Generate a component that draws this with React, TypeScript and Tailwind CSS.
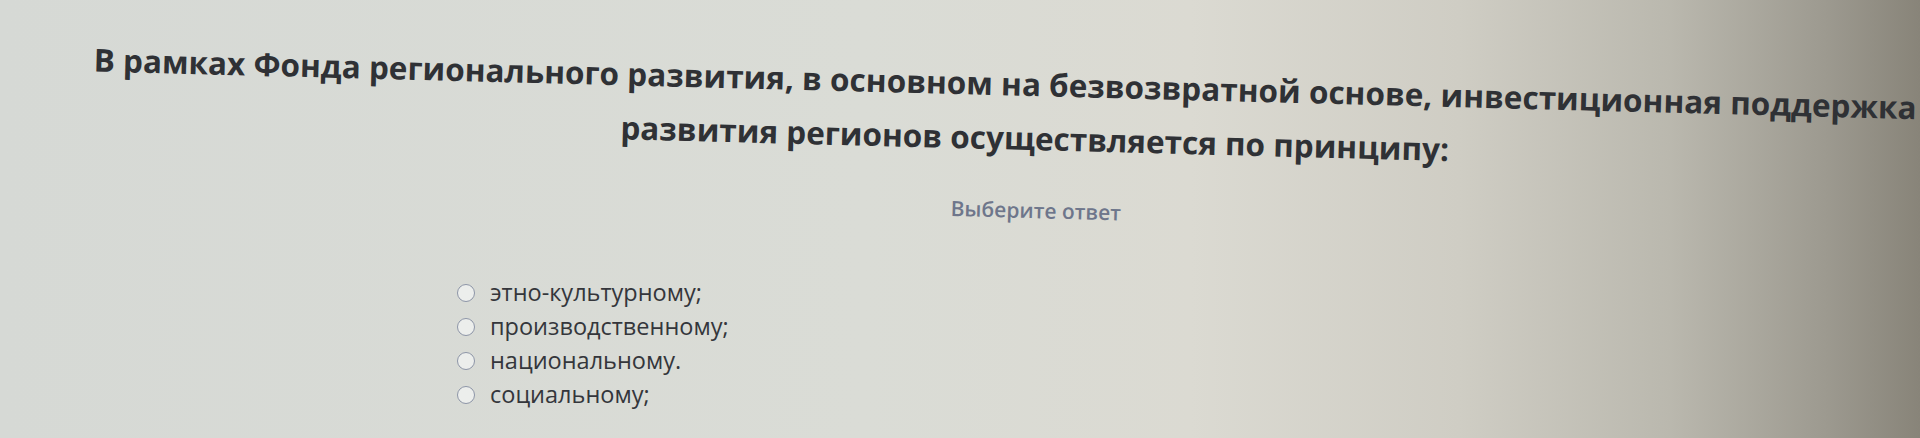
import React from 'react';

const options = ['этно-культурному;', 'производственному;', 'национальному.', 'социальному;'];

const QuizQuestion: React.FC = () => {
  return (
    <div
      className="w-[1920px] h-[438px] overflow-hidden bg-[linear-gradient(90deg,#d6d9d5_0%,#dadcd6_45%,#dbdad2_62%,#cfcdc4_76%,#bab8ae_87%,#9d9a90_95%,#888479_100%)]"
      style={{ fontFamily: '"Open Sans", "Noto Sans", sans-serif' }}
    >
      {/* photo is taken at a slight angle, so the heading is tilted */}
      <div className="origin-top-left rotate-[1.5deg] w-[2100px] pt-[30px]">
        <h1 className="w-[2014px] text-center text-[31.5px] leading-[54px] font-bold text-[#2f3135] whitespace-nowrap">
          <span className="block">
            В рамках Фонда регионального развития, в основном на безвозвратной основе, инвестиционная поддержка
          </span>
          <span className="block pl-[62px]">развития регионов осуществляется по принципу:</span>
        </h1>

        <div className="w-[2082px] text-center mt-[30px]">
          <span className="text-[21px] font-semibold text-[#6e768b]">Выберите ответ</span>
        </div>
      </div>

      {/* Options */}
      <div className="pl-[457px] mt-[76px] flex flex-col">
        {options.map((opt) => (
          <label key={opt} className="flex items-center gap-[15px] h-[34px] cursor-pointer">
            <span className="w-[18px] h-[18px] rounded-full border-[1.5px] border-[#8d95a7] bg-[#eceeec] shrink-0" />
            <span className="text-[23.5px] leading-none text-[#34363b]">{opt}</span>
          </label>
        ))}
      </div>
    </div>
  );
};

export default function App() {
  return <QuizQuestion />;
}
